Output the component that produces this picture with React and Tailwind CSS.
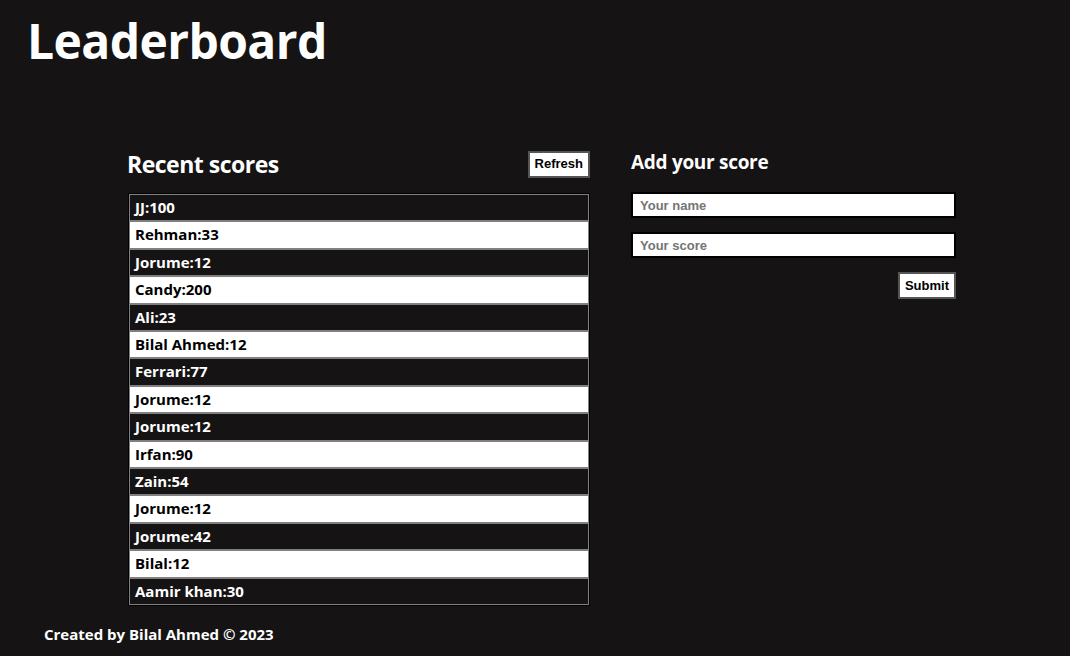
const SCORES = [
  ['JJ', 100],
  ['Rehman', 33],
  ['Jorume', 12],
  ['Candy', 200],
  ['Ali', 23],
  ['Bilal Ahmed', 12],
  ['Ferrari', 77],
  ['Jorume', 12],
  ['Jorume', 12],
  ['Irfan', 90],
  ['Zain', 54],
  ['Jorume', 12],
  ['Jorume', 42],
  ['Bilal', 12],
  ['Aamir khan', 30],
]

const heading = { fontFamily: '"Open Sans", "DejaVu Sans", sans-serif' }

export default function App() {
  return (
    <div className="min-h-[656px] w-full bg-[#151314] text-white font-['Open_Sans',sans-serif] flex flex-col">
      {/* Title */}
      <h1 className="pl-[27px] pt-[8px] text-[48px] leading-[66px] font-bold tracking-[-0.6px]">Leaderboard</h1>

      <div className="flex gap-[41px] pl-[128px] pt-[76px]">
        {/* Recent scores */}
        <div className="w-[462px] flex flex-col">
          <div className="flex items-center justify-between h-[28px]">
            <h2 className="text-[23px] leading-[28px] font-bold tracking-[-0.5px] -ml-[1px]">Recent scores</h2>
            <button className="bg-white text-black border-2 border-[#555] px-[5px] h-[27px] text-[13px] font-bold font-['Liberation_Sans',Arial,sans-serif]">
              Refresh
            </button>
          </div>
          <ul className="mt-[15px] border border-black">
            <div className="border border-[#808080]">
              {SCORES.map(([name, score], i) => (
                <li
                  key={i}
                  className={`px-[5px] leading-[19.4px] py-[3px] text-[15px] font-bold ${i > 0 ? 'border-t-2 border-[#808080]' : ''} ${i % 2 ? 'bg-white text-black' : 'bg-[#151314] text-white'}`}
                >
                  {name}:{score}
                </li>
              ))}
            </div>
          </ul>
        </div>

        {/* Add your score */}
        <div className="w-[325px] flex flex-col">
          <h2 className="text-[19px] leading-[24px] font-bold tracking-[-0.3px]">Add your score</h2>
          <input
            placeholder="Your name"
            className="mt-[18px] h-[26px] bg-white border-2 border-black px-[7px] text-[13px] font-bold text-black placeholder:text-[#757575] font-['Liberation_Sans',Arial,sans-serif] outline-none"
          />
          <input
            placeholder="Your score"
            className="mt-[14px] h-[26px] bg-white border-2 border-black px-[7px] text-[13px] font-bold text-black placeholder:text-[#757575] font-['Liberation_Sans',Arial,sans-serif] outline-none"
          />
          <div className="flex justify-end mt-[14px]">
            <button className="bg-white text-black border-2 border-[#555] px-[5px] h-[27px] text-[13px] font-bold font-['Liberation_Sans',Arial,sans-serif]">
              Submit
            </button>
          </div>
        </div>
      </div>

      <footer className="pl-[44px] pt-[17px] text-[15px] font-bold" style={heading}>
        Created by Bilal Ahmed © 2023
      </footer>
    </div>
  )
}
